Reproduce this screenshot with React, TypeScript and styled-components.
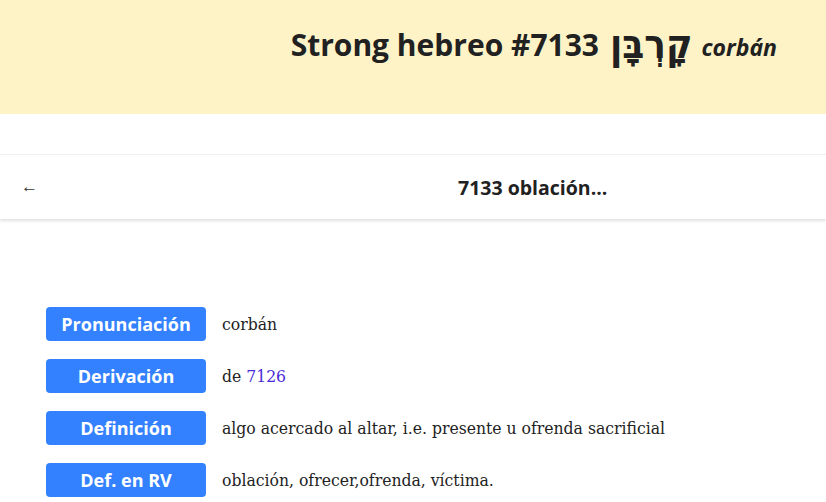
import React from "react";
import styled, { createGlobalStyle } from "styled-components";

const GlobalStyle = createGlobalStyle`
  html, body {
    margin: 0;
    padding: 0;
    background: #fff;
  }
  body {
    font-family: "Open Sans", "Noto Sans", sans-serif;
    color: #212121;
  }
`;

type Entry = { label: string; text: string; link?: string };

const rows: Entry[] = [
  { label: "Pronunciación", text: "corbán" },
  { label: "Derivación", text: "de ", link: "7126" },
  {
    label: "Definición",
    text: "algo acercado al altar, i.e. presente u ofrenda sacrificial",
  },
  { label: "Def. en RV", text: "oblación, ofrecer,ofrenda, víctima." },
];

const App: React.FC = () => {
  return (
    <Page>
      <GlobalStyle />
      <Banner>
        <BannerTitle>
          Strong hebreo #7133<Hebrew lang="he">קָרְבָּן</Hebrew>
          <Translit>corbán</Translit>
        </BannerTitle>
      </Banner>
      <Spacer />
      <NavBar>
        <BackButton>←</BackButton>
        <NavTitle>7133 oblación...</NavTitle>
      </NavBar>
      <Content>
        {rows.map((row) => (
          <Row key={row.label}>
            <Label>{row.label}</Label>
            <Value>
              {row.text}
              {row.link && <RefLink href="#">{row.link}</RefLink>}
            </Value>
          </Row>
        ))}
      </Content>
    </Page>
  );
};

const Page = styled.div`
  width: 100%;
`;

const Banner = styled.header`
  background: #fef3c7;
  height: 114px;
  display: flex;
  align-items: flex-start;
  justify-content: flex-end;
  padding: 24px 49px 0 0;
  box-sizing: border-box;
`;

const BannerTitle = styled.h1`
  margin: 0;
  font-size: 30px;
  font-weight: 700;
  line-height: 40px;
  color: #212121;
  display: flex;
  align-items: baseline;
  gap: 9px;
  white-space: pre;
`;

const Hebrew = styled.span`
  font-family: "DejaVu Sans", "Noto Sans", sans-serif;
  font-size: 36px;
  font-weight: 700;
  margin-left: 2px;
  display: inline-block;
  transform: scaleY(1.12);
  transform-origin: 50% 30%;
`;

const Translit = styled.i`
  font-size: 23px;
  font-weight: 700;
  font-style: italic;
`;

const Spacer = styled.div`
  height: 40px;
  border-bottom: 1px solid #f1f1f1;
`;

const NavBar = styled.nav`
  height: 64px;
  display: flex;
  align-items: center;
  box-shadow: 0 2px 3px rgba(0, 0, 0, 0.12);
  padding: 0 0 0 21px;
`;

const BackButton = styled.span`
  font-family: "Liberation Sans", sans-serif;
  font-size: 17px;
  color: #333;
  width: 17px;
`;

const NavTitle = styled.h2`
  margin: 0 0 0 420px;
  font-size: 19.5px;
  font-weight: 700;
  color: #212121;
`;

const Content = styled.section`
  padding: 88px 0 0 46px;
  display: flex;
  flex-direction: column;
  gap: 18px;
`;

const Row = styled.div`
  display: flex;
  align-items: center;
  gap: 16px;
`;

const Label = styled.span`
  width: 160px;
  height: 34px;
  border-radius: 4px;
  background: #3381ff;
  color: #fff;
  font-size: 18px;
  font-weight: 700;
  display: flex;
  align-items: center;
  justify-content: center;
  flex-shrink: 0;
`;

const Value = styled.span`
  font-family: "DejaVu Serif Condensed", "DejaVu Serif", serif;
  font-stretch: condensed;
  font-size: 17.4px;
  color: #222;
  white-space: pre;
`;

const RefLink = styled.a`
  color: #4a2bd8;
  text-decoration: none;
`;

export default App;
